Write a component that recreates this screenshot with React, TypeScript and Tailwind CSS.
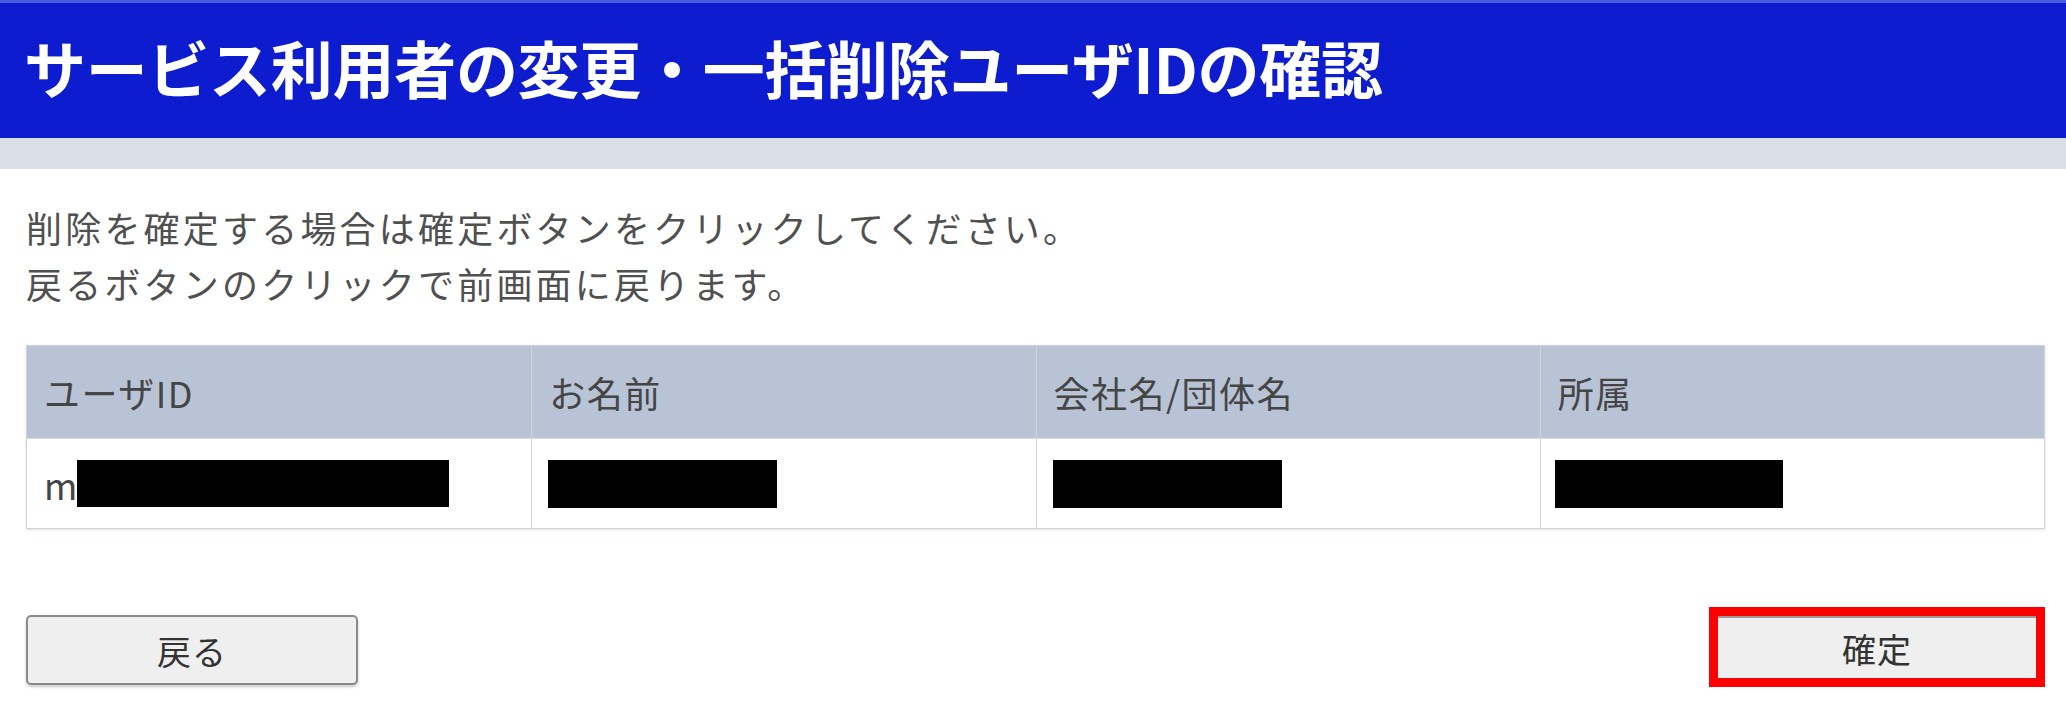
export default function App() {
  const font = { fontFamily: '"Noto Sans CJK JP", "Noto Sans", sans-serif' };
  const headers = ["ユーザID", "お名前", "会社名/団体名", "所属"];

  return (
    <div className="w-[2066px] h-[705px] bg-white overflow-hidden" style={font}>
      {/* page title */}
      <header className="h-[138px] bg-[#0d1ccf] border-t-[3px] border-[#4a5be0] flex items-center pl-[24px] pb-[8px]">
        <h1 className="text-[62px] font-bold text-white leading-none tracking-[-0.3px]">
          サービス利用者の変更・一括削除ユーザIDの確認
        </h1>
      </header>
      <div className="h-[31px] bg-[#d9dee7]" />

      <main className="pl-[26px] pr-[21px]">
        <div className="pt-[30px] text-[36px] leading-[56px] tracking-[3.2px] text-[#505050]">
          <p>削除を確定する場合は確定ボタンをクリックしてください。</p>
          <p>戻るボタンのクリックで前画面に戻ります。</p>
        </div>

        {/* target users */}
        <div className="mt-[34px] border border-[#cfd4dc] shadow-[0_1px_3px_rgba(0,0,0,0.12)]">
          <div className="grid grid-cols-4 h-[92px] bg-[#b8c4d6]">
            {headers.map((h, i) => (
              <div
                key={h}
                className={
                  "flex items-center px-[17px] text-[36px] tracking-[1.5px] text-[#454545] " +
                  (i > 0 ? "border-l border-[#cfd4dc]" : "")
                }
              >
                {h}
              </div>
            ))}
          </div>
          <div className="grid grid-cols-4 h-[90px] bg-white border-t border-[#d6dae1]">
            <div className="flex items-center pl-[17px] text-[36px] text-[#454545]">
              <span>m</span>
              <span className="w-[372px] h-[47px] bg-black" />
            </div>
            <div className="flex items-center pl-[16px] border-l border-[#cfd4dc]">
              <span className="w-[229px] h-[48px] bg-black" />
            </div>
            <div className="flex items-center pl-[16px] border-l border-[#cfd4dc]">
              <span className="w-[229px] h-[48px] bg-black" />
            </div>
            <div className="flex items-center pl-[14px] border-l border-[#cfd4dc]">
              <span className="w-[228px] h-[48px] bg-black" />
            </div>
          </div>
        </div>

        <div className="mt-[78px] flex justify-between items-start">
          <button className="mt-[8px] w-[332px] h-[70px] rounded-[5px] border-2 border-[#8a8a8a] bg-[#efefef] shadow-[0_2px_3px_rgba(0,0,0,0.2)] text-[34px] text-[#333] tracking-[1px]">
            戻る
          </button>
          <div className="w-[336px] h-[80px] border-[9px] border-[#ff0000] bg-white">
            <button className="w-full h-full border-t-2 border-[#9a9a9a] bg-[#efefef] text-[34px] text-[#333] tracking-[1px]">
              確定
            </button>
          </div>
        </div>
      </main>
    </div>
  );
}
